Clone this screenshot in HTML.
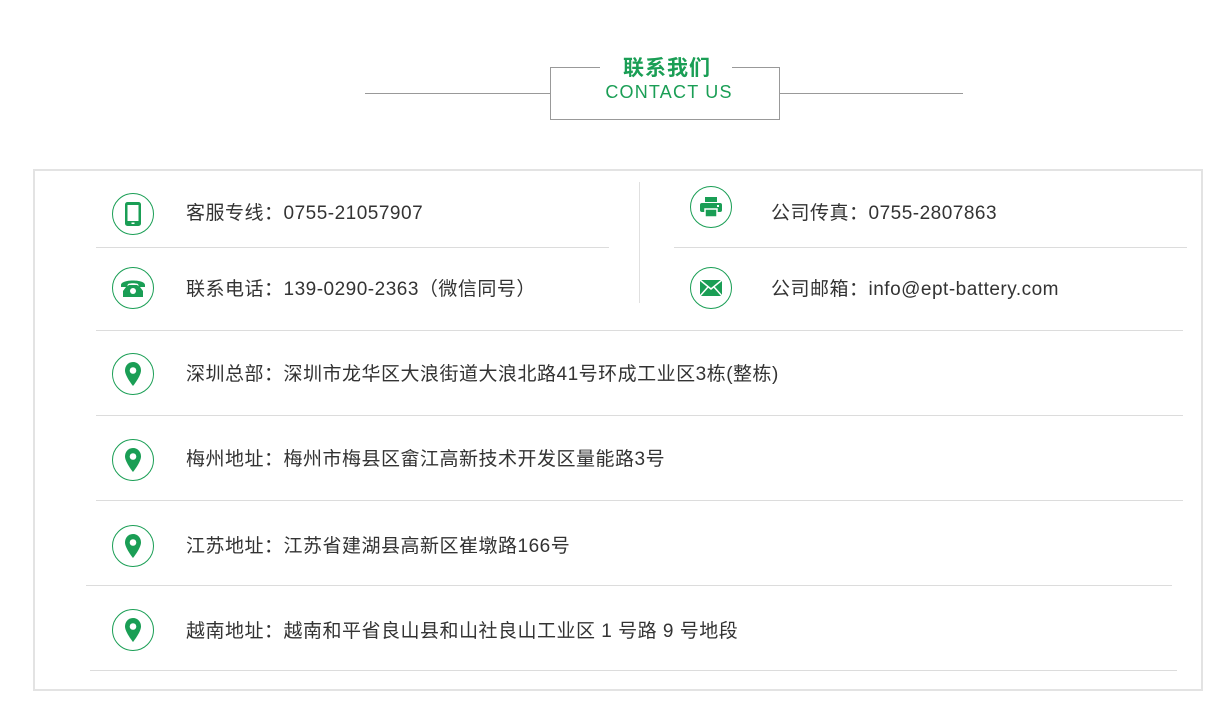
<!DOCTYPE html><html><head><meta charset="utf-8"><style>
body{margin:0;width:1225px;height:728px;background:#fff;position:relative;font-family:"Liberation Sans","Noto Sans CJK SC",sans-serif;overflow:hidden}
.a{position:absolute}
.hl{position:absolute;height:1px;background:#dcdcdc}
.ic{position:absolute;width:40px;height:40px;border:1px solid #1a9e55;border-radius:50%;display:flex;align-items:center;justify-content:center}
.t{position:absolute;font-size:19px;color:#333;line-height:24px;white-space:nowrap;letter-spacing:0.5px}
</style></head><body>
<div class="a" style="left:365px;top:93px;width:185px;height:1px;background:#999"></div>
<div class="a" style="left:779px;top:93px;width:184px;height:1px;background:#999"></div>
<div class="a" style="left:550px;top:67px;width:228px;height:51px;border:1px solid #999"></div>
<div class="a" style="left:600px;top:60px;width:132px;height:14px;background:#fff"></div>
<div class="a" style="left:552px;top:56px;width:230px;text-align:center;font-size:21px;font-weight:bold;color:#1a9e55;line-height:26px;letter-spacing:1px">联系我们</div>
<div class="a" style="left:554px;top:81px;width:230px;text-align:center;font-size:18px;color:#1a9e55;line-height:22px;letter-spacing:1.2px">CONTACT US</div>

<div class="a" style="left:33px;top:169px;width:1166px;height:518px;border:2px solid #e3e3e3"></div>
<div class="a" style="left:639px;top:182px;width:1px;height:121px;background:#e0e0e0"></div>
<div class="hl" style="left:96px;top:247px;width:513px"></div>
<div class="hl" style="left:674px;top:247px;width:513px"></div>
<div class="hl" style="left:96px;top:330px;width:1087px"></div>
<div class="hl" style="left:96px;top:415px;width:1087px"></div>
<div class="hl" style="left:96px;top:500px;width:1087px"></div>
<div class="hl" style="left:86px;top:585px;width:1086px"></div>
<div class="hl" style="left:90px;top:670px;width:1087px"></div>

<div class="ic" style="left:112px;top:193px"><svg width="20" height="26" viewBox="0 0 20 26"><rect x="2" y="1" width="16" height="24" rx="2.5" fill="#1a9e55"/><rect x="4.5" y="4" width="11" height="16" fill="#fff"/><rect x="8.5" y="21.5" width="3" height="1.5" fill="#fff"/></svg></div>
<div class="ic" style="left:112px;top:267px"><svg width="26" height="22" viewBox="0 0 26 22"><path d="M1 8C1 2 25 2 25 8L25 10 19 10 18 7C15 6 11 6 8 7L7 10 1 10Z" fill="#1a9e55"/><path d="M6 10L9 8 17 8 20 10 23 14 23 20 3 20 3 14Z" fill="#1a9e55"/><circle cx="13" cy="14" r="3" fill="#fff"/></svg></div>
<div class="ic" style="left:690px;top:186px"><svg width="24" height="22" viewBox="0 0 24 22"><rect x="6" y="1" width="12" height="5" fill="#1a9e55"/><rect x="1" y="7" width="22" height="9" rx="2" fill="#1a9e55"/><rect x="6" y="13" width="12" height="8" fill="#1a9e55" stroke="#fff" stroke-width="1.5"/><rect x="18" y="9" width="2" height="2" fill="#fff"/></svg></div>
<div class="ic" style="left:690px;top:267px"><svg width="24" height="18" viewBox="0 0 24 18"><rect x="1" y="1" width="22" height="16" fill="#1a9e55"/><path d="M1 1L12 10 23 1M1 17L9 8M23 17L15 8" stroke="#fff" stroke-width="1.5" fill="none"/></svg></div>
<svg width="0" height="0" style="position:absolute"><defs><symbol id="pin" viewBox="0 0 20 26"><path d="M10 1C5 1 2 5 2 9.5 2 15 10 25 10 25S18 15 18 9.5C18 5 15 1 10 1Z" fill="#1a9e55"/><circle cx="10" cy="9.5" r="3.3" fill="#fff"/></symbol></defs></svg>
<div class="ic" style="left:112px;top:353px"><svg width="20" height="26"><use href="#pin"/></svg></div>
<div class="ic" style="left:112px;top:439px"><svg width="20" height="26"><use href="#pin"/></svg></div>
<div class="ic" style="left:112px;top:525px"><svg width="20" height="26"><use href="#pin"/></svg></div>
<div class="ic" style="left:112px;top:609px"><svg width="20" height="26"><use href="#pin"/></svg></div>

<div class="t" style="left:186px;top:202px">客服专线：0755-21057907</div>
<div class="t" style="left:186px;top:278px">联系电话：139-0290-2363（微信同号）</div>
<div class="t" style="left:771px;top:202px">公司传真：0755-2807863</div>
<div class="t" style="left:771px;top:278px">公司邮箱：info@ept-battery.com</div>
<div class="t" style="left:186px;top:363px">深圳总部：深圳市龙华区大浪街道大浪北路41号环成工业区3栋(整栋)</div>
<div class="t" style="left:186px;top:448px">梅州地址：梅州市梅县区畲江高新技术开发区量能路3号</div>
<div class="t" style="left:186px;top:535px">江苏地址：江苏省建湖县高新区崔墩路166号</div>
<div class="t" style="left:186px;top:620px">越南地址：越南和平省良山县和山社良山工业区 1 号路 9 号地段</div>
</body></html>
